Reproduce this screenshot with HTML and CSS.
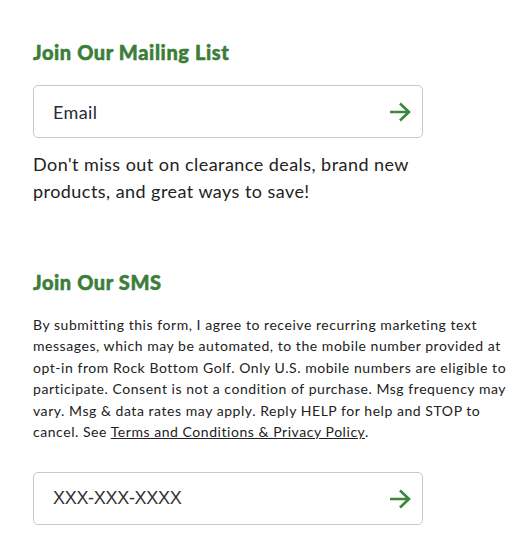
FILE: index.html
```html
<!DOCTYPE html>
<html>
<head>
<meta charset="utf-8">
<link rel="stylesheet" href="styles.css">
</head>
<body>
<main class="wrap">
  <section class="block">
    <h2 class="title">Join Our Mailing List</h2>
    <div class="field">
      <span class="placeholder">Email</span>
      <svg class="arrow" viewBox="0 0 24 22" width="24" height="22"><path d="M2 11H21M12 2.5L21 11L12 19.5" fill="none" stroke="#3b873e" stroke-width="2.6" stroke-linecap="butt" stroke-linejoin="miter"/></svg>
    </div>
    <p class="lead">Don't miss out on clearance deals, brand new products, and great ways to save!</p>
  </section>
  <section class="block sms">
    <h2 class="title">Join Our SMS</h2>
    <p class="legal">By submitting this form, I agree to receive recurring marketing text messages, which may be automated, to the mobile number provided at opt-in from Rock Bottom Golf. Only U.S. mobile numbers are eligible to participate. Consent is not a condition of purchase. Msg frequency may vary. Msg &amp; data rates may apply. Reply HELP for help and STOP to cancel. See <a href="#">Terms and Conditions &amp; Privacy Policy</a>.</p>
    <div class="field phone">
      <span class="placeholder mono">XXX-XXX-XXXX</span>
      <svg class="arrow" viewBox="0 0 24 22" width="24" height="22"><path d="M2 11H21M12 2.5L21 11L12 19.5" fill="none" stroke="#3b873e" stroke-width="2.6" stroke-linecap="butt" stroke-linejoin="miter"/></svg>
    </div>
  </section>
</main>
</body>
</html>
```
FILE: styles.css
```css
*, *::before, *::after { box-sizing: border-box; }
html, body { margin: 0; padding: 0; background: #fff; }
body { font-family: Lato, "Noto Sans", sans-serif; color: #2a2a2a; }
.wrap { padding: 40px 20px 0 33px; width: 530px; }
.title {
  margin: 0;
  font-size: 20px;
  font-weight: 900;
  color: #3b7d39;
  line-height: 24px;
  letter-spacing: 0.6px;
  -webkit-text-stroke: 0.5px #3b7d39;
}
.field {
  margin-top: 21px;
  width: 390px;
  height: 53px;
  border: 1px solid #c8c8c8;
  border-radius: 5px;
  display: flex;
  align-items: center;
  justify-content: space-between;
  padding: 0 10px 0 19px;
}
.placeholder { font-size: 18px; color: #2a2a3a; letter-spacing: 0.4px; }
.placeholder.mono { font-family: "Liberation Sans", Arial, sans-serif; color: #333; font-size: 18px; letter-spacing: -0.3px; }
.arrow { display: block; }
.lead {
  margin: 13px 0 0;
  max-width: 395px;
  font-size: 18px;
  line-height: 27px;
  color: #222;
  letter-spacing: 0.45px;
}
.sms { margin-top: 65px; }
.legal {
  margin: 20px 0 0;
  font-size: 14px;
  line-height: 21.4px;
  color: #222;
  letter-spacing: 0.55px;
}
.legal a { color: #222; text-decoration: underline; }
.phone { margin-top: 30px; }
```
